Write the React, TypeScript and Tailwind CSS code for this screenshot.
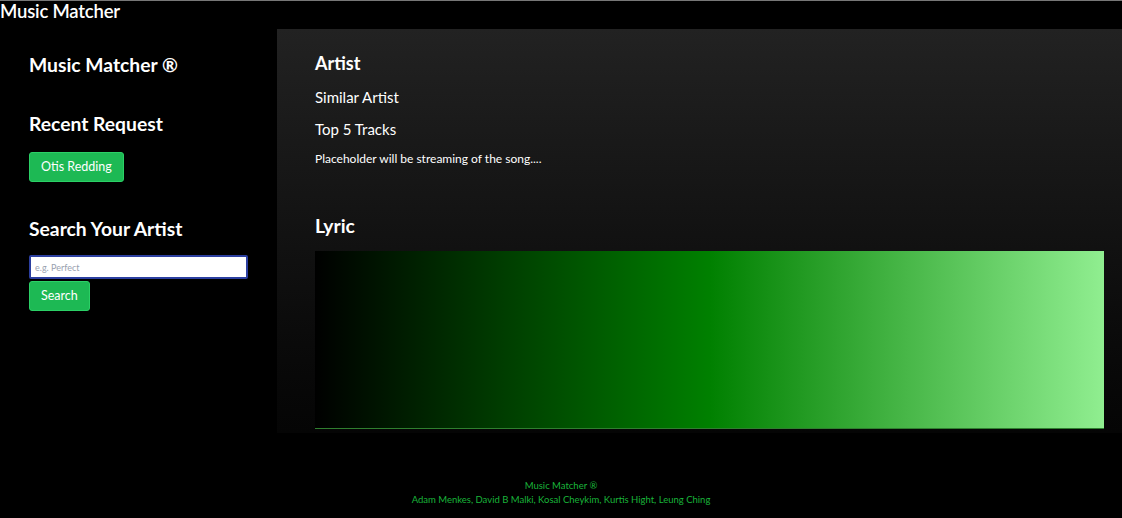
export default function App() {
  return (
    <div className="min-h-[518px] w-full bg-black text-white font-['Lato','Open_Sans',sans-serif] border-t border-[#777]">
      <header className="h-[28px] flex items-start">
        <h1 className="text-[18.5px] font-semibold leading-[20px] tracking-[-0.2px]">Music Matcher</h1>
      </header>

      <div className="flex">
        <aside className="w-[277px] shrink-0 pl-[29px] pt-[24px]">
          <h2 className="text-[19.3px] font-bold leading-[24px]">Music Matcher ®</h2>

          <h3 className="mt-[35px] text-[19.3px] font-bold leading-[24px]">Recent Request</h3>
          <button className="mt-[16px] h-[30px] px-[11px] rounded-[3px] bg-[#1db954] border border-[#2bd066] text-[12.5px] text-white">
            Otis Redding
          </button>

          <h3 className="mt-[35px] text-[19.3px] font-bold leading-[24px]">Search Your Artist</h3>
          <div className="mt-[14px] flex flex-col items-start">
            <input
              className="w-[219px] h-[24px] rounded-[2px] bg-white border-2 border-[#2c3fa0] px-[4px] text-[9px] text-gray-800 placeholder:text-gray-400 outline-none"
              placeholder="e.g. Perfect"
            />
            <button className="mt-[2px] h-[30px] px-[11px] rounded-[3px] bg-[#1db954] border border-[#2bd066] text-[12.5px] text-white">
              Search
            </button>
          </div>
        </aside>

        <main className="flex-1 h-[404px] bg-gradient-to-b from-[#222222] to-[#050505] pl-[38px] pr-[18px] pt-[23px]">
          <h2 className="text-[18px] font-bold leading-[22px]">Artist</h2>
          <p className="mt-[13px] text-[15px] leading-[20px]">Similar Artist</p>
          <p className="mt-[12px] text-[15px] leading-[20px]">Top 5 Tracks</p>
          <p className="mt-[12px] text-[12px] leading-[16px]">Placeholder will be streaming of the song....</p>

          <h2 className="mt-[47px] text-[19.3px] font-bold leading-[24px]">Lyric</h2>
          <div className="mt-[13px] h-[178px] w-full bg-[linear-gradient(to_right,#000000,#008000_50%,#90ee90)] border-b border-[#2f7f2f]" />
        </main>
      </div>

      <footer className="pt-[46px] pb-[10px] text-center text-[9.5px] leading-[14px] text-[#19b43a]">
        <p>Music Matcher ®</p>
        <p>Adam Menkes, David B Malki, Kosal Cheykim, Kurtis Hight, Leung Ching</p>
      </footer>
    </div>
  );
}
